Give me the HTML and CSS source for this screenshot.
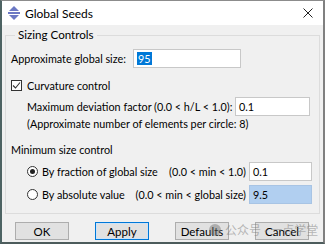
FILE: index.html
```html
<!DOCTYPE html>
<html lang="en">
  <head>
    <meta charset="UTF-8" />
    <title>Global Seeds</title>
    <link rel="stylesheet" href="styles.css">
  </head>
  <body>
    <div class="window">
      <div class="titlebar">
        <svg class="app-icon" width="12" height="14" viewBox="0 0 12 14">
          <path d="M6 0 L11 5 L1 5 Z" fill="#6b78c4" />
          <rect x="0" y="6" width="12" height="2" fill="#6b78c4" />
          <path d="M1 9 L11 9 L6 14 Z" fill="#6b78c4" />
        </svg>
        <span class="title">Global Seeds</span>
        <svg class="close" width="10" height="10" viewBox="0 0 10 10">
          <path d="M0.5 0.5 L9.5 9.5 M9.5 0.5 L0.5 9.5" stroke="#222" stroke-width="1" />
        </svg>
      </div>

      <div class="content">
        <fieldset class="group">
          <legend>Sizing Controls</legend>

          <div class="row row-global">
            <span class="lbl-global">Approximate global size:</span>
            <div class="field field-global"><span class="sel">95</span></div>
          </div>

          <div class="row row-check">
            <span class="checkbox">
              <svg width="9" height="9" viewBox="0 0 9 9">
                <path d="M1 4.5 L3.5 7 L8 1.5" fill="none" stroke="#333" stroke-width="1.1" />
              </svg>
            </span>
            <span>Curvature control</span>
          </div>

          <div class="row row-dev indent">
            <span class="lbl-dev">Maximum deviation factor (0.0 &lt; h/L &lt; 1.0):</span>
            <div class="field field-dev">0.1</div>
          </div>

          <div class="row row-note indent">
            <span>(Approximate number of elements per circle: 8)</span>
          </div>

          <div class="row row-min">
            <span>Minimum size control</span>
          </div>

          <div class="row row-radio indent">
            <span class="radio on"></span>
            <span>By fraction of global size</span>
            <span class="range">(0.0 &lt; min &lt; 1.0)</span>
            <div class="field field-min">0.1</div>
          </div>

          <div class="row row-radio row-radio2 indent">
            <span class="radio"></span>
            <span>By absolute value</span>
            <span class="range">(0.0 &lt; min &lt; global size)</span>
            <div class="field field-min field-blue">9.5</div>
          </div>
        </fieldset>

        <div class="buttons">
          <button class="btn">OK</button>
          <button class="btn btn-default">Apply</button>
          <button class="btn">Defaults</button>
          <button class="btn">Cancel</button>
        </div>

        <div class="watermark">
          <span class="wm-dot"></span>
          <span>公众号 · 一点学堂</span>
        </div>
      </div>
    </div>
  </body>
</html>
```

FILE: styles.css
```css
* {
  margin: 0;
  padding: 0;
  box-sizing: border-box;
}

body {
  font-family: Lato, "Noto Sans CJK SC", sans-serif;
  font-size: 10.8px;
  color: #000;
  background: #4d6363;
}

.window {
  width: 325px;
  height: 244px;
  border-left: 2px solid #4d6363;
  border-right: 2px solid #808080;
  border-top: 1px solid #8c8c8c;
  border-bottom: 2px solid #4d5c5c;
  background: #f0f0f0;
  position: relative;
  overflow: hidden;
}

.titlebar {
  height: 24px;
  background: #fff;
  display: flex;
  align-items: center;
  padding-left: 6px;
}

.app-icon {
  margin-right: 5px;
}

.title {
  font-size: 12px;
  flex: 1;
}

.close {
  margin-right: 10px;
}

.content {
  padding: 3px 3px 0 3px;
}

.group {
  border: 1px solid #dcdcdc;
  height: 186px;
  padding: 0 7px 0 5px;
}

.group legend {
  margin-left: 4px;
  padding: 0 3px;
  line-height: 14px;
  height: 14px;
  font-size: 11.6px;
}

.row {
  display: flex;
  align-items: center;
  white-space: nowrap;
}

.row > span {
  flex-shrink: 0;
}

.indent {
  padding-left: 16px;
}

.row-global {
  margin-top: 7px;
  height: 19px;
}

.lbl-global {
  width: 122px;
}

.field {
  height: 19px;
  background: #fff;
  border: 1px solid #c8c8c8;
  padding-left: 3px;
  line-height: 17px;
}

.field-global {
  width: 108px;
}

.sel {
  background: #0078d7;
  color: #fff;
  padding: 0 1px;
}

.row-check {
  margin-top: 9px;
  height: 16px;
}

.checkbox {
  width: 11px;
  height: 11px;
  border: 1px solid #333;
  background: #fff;
  display: flex;
  align-items: center;
  justify-content: center;
  margin-right: 5px;
}

.row-dev {
  margin-top: 4px;
  height: 19px;
}

.lbl-dev {
  width: 208px;
}

.field-dev {
  width: 75px;
}

.row-note {
  height: 14px;
}

.row-min {
  margin-top: 12px;
  height: 14px;
}

.row-radio {
  margin-top: 6px;
  height: 19px;
}

.row-radio2 {
  margin-top: 4px;
}

.radio {
  width: 11px;
  height: 11px;
  border: 1px solid #333;
  border-radius: 50%;
  background: #fff;
  margin-right: 4px;
  position: relative;
}

.radio.on::after {
  content: "";
  position: absolute;
  left: 2px;
  top: 2px;
  width: 5px;
  height: 5px;
  border-radius: 50%;
  background: #222;
}

.range {
  margin-left: auto;
  margin-right: 3px;
}

.field-min {
  width: 63px;
}

.field-blue {
  background: #b1cff0;
  border-color: #a8c4e4;
}

.buttons {
  display: flex;
  justify-content: space-between;
  padding: 8px 11px 0 10px;
}

.btn {
  font-family: inherit;
  font-size: 11.5px;
  width: 54px;
  height: 18px;
  background: #e1e1e1;
  border: 1px solid #adadad;
  color: #000;
}

.btn-default {
  border: 1px solid #0078d7;
  box-shadow: inset 0 0 0 1px #cfe3f7;
}

.watermark {
  position: absolute;
  left: 207px;
  top: 220px;
  display: flex;
  align-items: center;
  gap: 4px;
  color: rgba(120, 120, 120, 0.5);
  font-size: 12px;
  pointer-events: none;
}

.wm-dot {
  width: 12px;
  height: 12px;
  border-radius: 50%;
  background: rgba(110, 110, 110, 0.45);
}
```
